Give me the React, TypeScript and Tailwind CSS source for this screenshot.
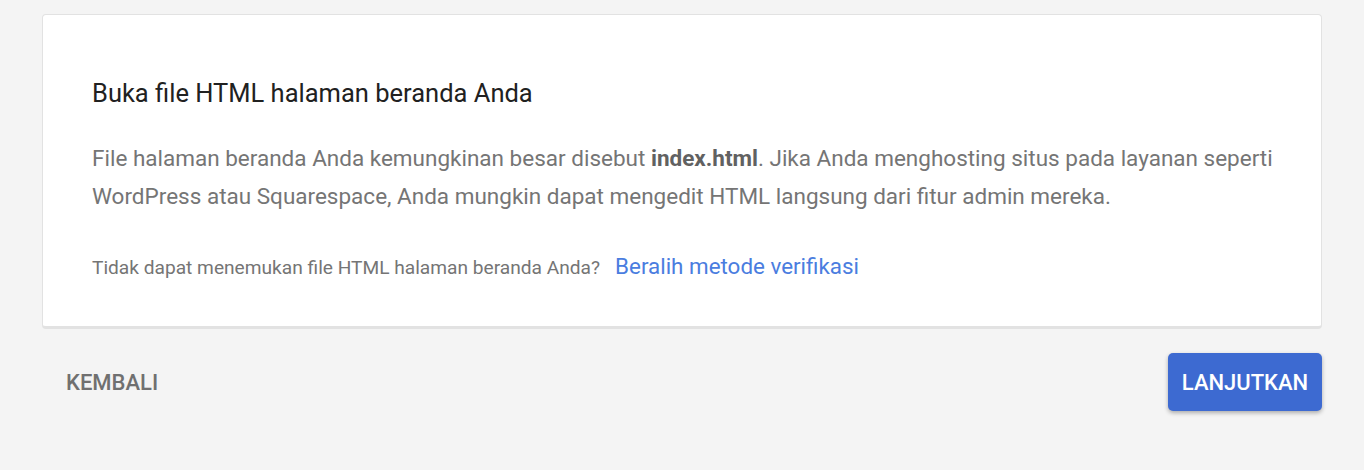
export default function App() {
  return (
    <div
      className="min-h-[470px] w-full bg-[#f4f4f4] px-[42px] pt-[14px]"
      style={{ fontFamily: "Roboto, 'Noto Sans', sans-serif" }}
    >
      <div className="rounded-[4px] border border-[#e2e2e2] border-b-[3px] bg-white pl-[49px] pr-10 pt-[63px] pb-[45px]">
        <h2 className="text-[25.5px] leading-[30px] text-[#212121]">
          Buka file HTML halaman beranda Anda
        </h2>
        <p className="mt-[31px] text-[22.5px] leading-[38px] text-[#757575]">
          File halaman beranda Anda kemungkinan besar disebut{" "}
          <span className="font-bold text-[#616161]">index.html</span>. Jika Anda menghosting situs pada layanan seperti
          <br />
          WordPress atau Squarespace, Anda mungkin dapat mengedit HTML langsung dari fitur admin mereka.
        </p>
        <div className="mt-[38px] flex items-baseline gap-[15px]">
          <span className="text-[19.15px] leading-[26px] text-[#757575]">
            Tidak dapat menemukan file HTML halaman beranda Anda?
          </span>
          <a className="text-[22.4px] leading-[26px] text-[#4a7de0]" href="#">
            Beralih metode verifikasi
          </a>
        </div>
      </div>
      <div className="mt-[24px] flex items-center justify-between">
        <button className="ml-[24px] text-[22px] font-medium text-[#707070]">KEMBALI</button>
        <button className="h-[58px] w-[154px] rounded-[5px] bg-[#3d6ad1] text-[22px] font-medium text-white shadow-[0_2px_4px_rgba(0,0,0,0.3)]">
          LANJUTKAN
        </button>
      </div>
    </div>
  );
}
